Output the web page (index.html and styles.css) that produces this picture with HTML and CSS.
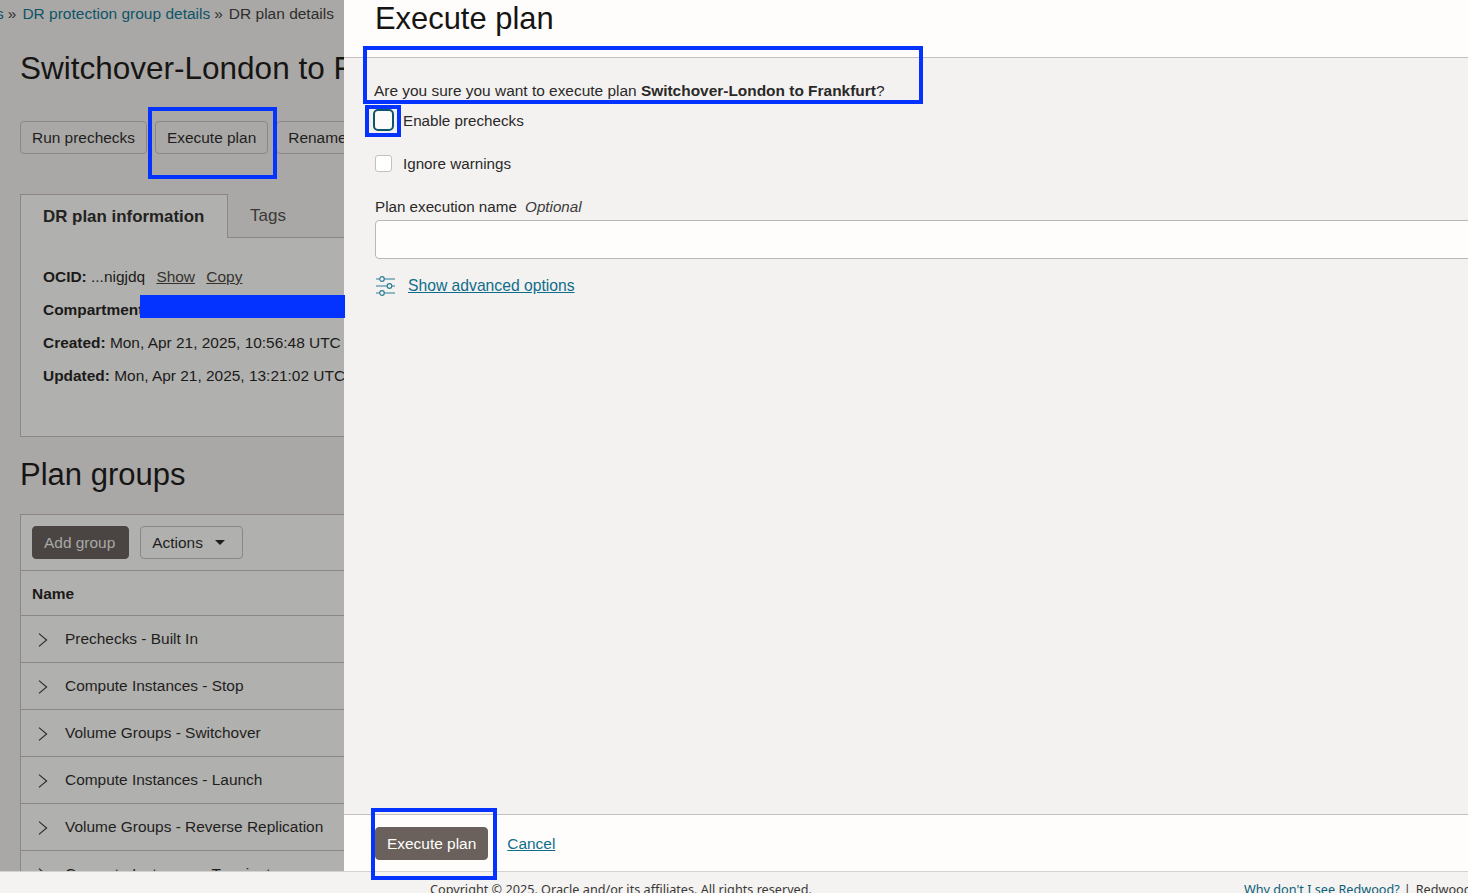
FILE: index.html
```html
<!DOCTYPE html>
<html lang="en">
<head>
<meta charset="utf-8">
<title>Execute plan</title>
<link rel="stylesheet" href="styles.css">
</head>
<body>
<div class="app">
  <div class="main">
    <div class="page">
      <nav class="crumbs"><a class="crumb-cut">s</a><span class="sep">»</span><a>DR protection group details</a><span class="sep">»</span><span>DR plan details</span></nav>
      <h1 class="title">Switchover-London to Frankfurt</h1>
      <div class="actions">
        <button class="btn">Run prechecks</button>
        <button class="btn">Execute plan</button>
        <button class="btn">Rename</button>
      </div>
      <div class="tabs">
        <div class="tab active">DR plan information</div>
        <div class="tab">Tags</div>
      </div>
      <section class="info">
        <p><b>OCID:</b> ...nigjdq <u class="act">Show</u> <u class="act">Copy</u></p>
        <p><b>Compartment:</b></p>
        <p><b>Created:</b> Mon, Apr 21, 2025, 10:56:48 UTC</p>
        <p><b>Updated:</b> Mon, Apr 21, 2025, 13:21:02 UTC</p>
      </section>
      <h2 class="subtitle">Plan groups</h2>
      <section class="table">
        <div class="toolbar">
          <button class="btn dark">Add group</button>
          <button class="btn">Actions<svg class="caret" width="10" height="5" viewBox="0 0 10 5"><path d="M0 0h10L5 5z"/></svg></button>
        </div>
        <div class="thead">Name</div>
        <div class="row"><svg class="chev" width="10" height="14" viewBox="0 0 10 14"><path d="M1 .7 8.6 7 1 13.3"/></svg>Prechecks - Built In</div>
        <div class="row"><svg class="chev" width="10" height="14" viewBox="0 0 10 14"><path d="M1 .7 8.6 7 1 13.3"/></svg>Compute Instances - Stop</div>
        <div class="row"><svg class="chev" width="10" height="14" viewBox="0 0 10 14"><path d="M1 .7 8.6 7 1 13.3"/></svg>Volume Groups - Switchover</div>
        <div class="row"><svg class="chev" width="10" height="14" viewBox="0 0 10 14"><path d="M1 .7 8.6 7 1 13.3"/></svg>Compute Instances - Launch</div>
        <div class="row"><svg class="chev" width="10" height="14" viewBox="0 0 10 14"><path d="M1 .7 8.6 7 1 13.3"/></svg>Volume Groups - Reverse Replication</div>
        <div class="row"><svg class="chev" width="10" height="14" viewBox="0 0 10 14"><path d="M1 .7 8.6 7 1 13.3"/></svg>Compute Instances - Terminate</div>
      </section>
    </div>
    <aside class="panel">
      <header class="panel-head"><h2 class="panel-title">Execute plan</h2></header>
      <div class="panel-body">
        <p class="msg">Are you sure you want to execute plan <b>Switchover-London to Frankfurt</b>?</p>
        <label class="check"><span class="box focus"></span>Enable prechecks</label>
        <label class="check second"><span class="box"></span>Ignore warnings</label>
        <div class="field-label">Plan execution name <i>Optional</i></div>
        <div class="input"></div>
        <div class="advanced">
          <svg width="21" height="20" viewBox="0 0 21 20" fill="none" stroke="#2c7d96" stroke-width="1.2"><path d="M1 3h3.500M9.500 3H20M1 10h11M17 10h3M1 17h3.500M9.500 17H20"/><circle cx="7" cy="3" r="2.300"/><circle cx="14.500" cy="10" r="2.300"/><circle cx="7" cy="17" r="2.300"/></svg>
          <a class="link adv-link">Show advanced options</a>
        </div>
      </div>
      <footer class="panel-foot">
        <button class="btn primary">Execute plan</button>
        <a class="link">Cancel</a>
      </footer>
    </aside>
  </div>
  <footer class="page-foot">
    <span class="copy">Copyright © 2025. Oracle and/or its affiliates. All rights reserved.</span>
    <span class="foot-right"><a>Why don't I see Redwood?</a><span class="pipe">|</span><span>Redwood</span></span>
  </footer>
</div>
<div class="mark m-exec"></div>
<div class="mark m-msg"></div>
<div class="mark m-check"></div>
<div class="mark m-foot"></div>
<div class="redact"></div>
</body>
</html>
```
FILE: styles.css
```css
* { box-sizing: border-box; }
html, body { margin: 0; height: 100%; overflow: hidden; }
body { font-family: "Liberation Sans", Arial, sans-serif; font-size: 15.450px; color: #1c1b1a; position: relative; }
button { font: inherit; }
p, h1, h2 { margin: 0; font-weight: 400; }
.app { width: 1468px; height: 893px; display: flex; flex-direction: column; overflow: hidden; }
.main { height: 871px; flex: none; display: flex; overflow: hidden; }

.page { width: 344px; flex: none; overflow: hidden; background: #a9a8a6; padding: 0 0 0 20px; color: #1b1a19; }
.page > * { width: 600px; }
.crumbs { height: 28px; line-height: 28px; margin-left: -20px; white-space: nowrap; color: #2f2e2c; font-size: 15.500px; }
.crumbs a { color: #0f5468; }
.crumb-cut { margin-left: -4px; }
.sep { margin: 0 6px 0 4px; }
.title { font-size: 31.500px; line-height: 38px; margin-top: 21px; white-space: nowrap; color: #161514; }
.actions { display: flex; gap: 8px; margin-top: 34px; }
.btn { height: 33px; padding: 0 11px; background: transparent; border: 1px solid #8b8785; border-radius: 4px; color: #1f1e1d; display: inline-flex; align-items: center; white-space: nowrap; }
.btn.dark { background: #4a4542; border-color: #4a4542; color: #a9a8a6; padding: 0 13px 0 11px; }
.caret { margin: 0 6px 0 12px; fill: #1f1e1d; }

.tabs { display: flex; margin-top: 40px; height: 44px; font-size: 17px; }
.tab { height: 44px; padding: 0 22px; line-height: 43px; color: #3a3937; border-bottom: 1px solid #8b8785; flex: 1; white-space: nowrap; }
.tab.active { flex: none; width: 208px; font-weight: 700; font-size: 16.900px; background: #b0b0ae; border: 1px solid #8b8785; border-bottom: 0; color: #232221; }
.info { height: 199px; background: #b0b0ae; border: 1px solid #8b8785; border-top: 0; padding: 30px 0 0 22px; display: flex; flex-direction: column; gap: 16px; white-space: nowrap; }
.info p { line-height: 17px; }
.act { margin-left: 7px; color: #34322f; }
.subtitle { font-size: 31px; line-height: 36px; margin-top: 20px; color: #161514; }
.table { margin-top: 21px; background: #b0b0ae; border: 1px solid #8b8785; }
.toolbar { height: 56px; padding: 11px; display: flex; gap: 11px; border-bottom: 1px solid #8b8785; }
.thead { height: 45px; line-height: 45px; padding-left: 11px; font-weight: 700; border-bottom: 1px solid #8b8785; }
.row { height: 47px; padding: 0 0 1px 17px; display: flex; align-items: center; border-bottom: 1px solid #8b8785; color: #1f1e1d; }
.chev { margin-right: 17px; margin-top: 3px; fill: none; stroke: #2a2928; stroke-width: 1.1; }

.panel { flex: 1; min-width: 0; display: flex; flex-direction: column; background: #f3f2f1; }
.panel-head { height: 58px; flex: none; background: #fefdfc; border-bottom: 1px solid #c4c0bd; padding-left: 31px; overflow: hidden; }
.panel-title { font-size: 30.900px; line-height: 38px; color: #161513; }
.panel-body { flex: 1; padding: 24px 0 0 31px; color: #2a2928; overflow: hidden; }
.msg { line-height: 17px; margin-left: -1px; }
.check { display: flex; align-items: center; height: 20px; margin-top: 11px; gap: 11px; font-size: 15.200px; }
.check.second { margin-top: 23px; }
.box { width: 17px; height: 17px; background: #fff; border: 1px solid #c4c0bd; border-radius: 3px; flex: none; }
.box.focus { border: 2px solid #10566a; border-radius: 5px; width: 21px; height: 22px; margin: 0 -2px 0 -2px; background: #fbfbfa; }
.field-label { margin-top: 25px; line-height: 17px; font-size: 15.200px; }
.field-label i { margin-left: 4px; color: #3d3b39; }
.input { height: 39px; margin-top: 5px; margin-right: -6px; background: #fefdfc; border: 1px solid #bcb7b3; border-radius: 4px; }
.advanced { display: flex; align-items: center; gap: 12px; margin-top: 17px; height: 20px; }
.link { color: #0f6d8a; text-decoration: underline; }
.adv-link { font-size: 15.700px; }
.panel-foot { height: 57px; flex: none; background: #fefdfc; border-top: 1px solid #c4c0bd; padding: 12px 0 0 31px; display: flex; align-items: flex-start; gap: 19px; }
.panel-foot .link { line-height: 33px; }
.btn.primary { background: #6a615c; border-color: #6a615c; color: #fff; }

.page-foot { flex: none; height: 22px; background: #f4f3f1; border-top: 1px solid #d4d2d0; font-family: "Noto Sans", sans-serif; font-size: 12.670px; line-height: 34px; color: #3a3937; white-space: nowrap; display: flex; padding-left: 430px; }
.foot-right { margin-left: auto; width: 224px; overflow: hidden; flex: none; }
.foot-right a { color: #0f5f7a; }
.pipe { margin: 0 5px 0 4px; }

.mark { position: absolute; border: 4px solid #0433ff; pointer-events: none; }
.m-exec { left: 148px; top: 107px; width: 129px; height: 72px; }
.m-msg { left: 363px; top: 46px; width: 560px; height: 58px; }
.m-check { left: 365px; top: 105px; width: 36px; height: 32px; }
.m-foot { left: 371px; top: 808px; width: 126px; height: 72px; }
.redact { position: absolute; left: 140px; top: 295px; width: 205px; height: 23px; background: #0433ff; }
```
